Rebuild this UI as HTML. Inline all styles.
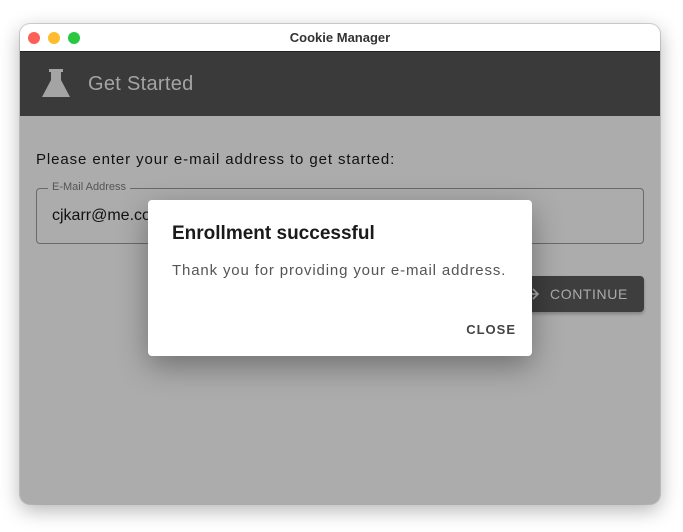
<!DOCTYPE html>
<html><head><meta charset="utf-8"><style>
*{margin:0;padding:0;box-sizing:border-box}
body{width:683px;height:532px;background:#fff;font-family:"Liberation Sans",sans-serif;position:relative;overflow:hidden}
.win{position:absolute;left:20px;top:24px;width:640px;height:480px;border-radius:10px;overflow:hidden;box-shadow:0 6px 20px rgba(0,0,0,.3),0 0 0 1px rgba(0,0,0,.15);background:#acacac}
.tb{position:absolute;left:0;top:0;width:640px;height:28px;background:#fff;border-bottom:1px solid #222;text-align:center;font-size:13px;font-weight:bold;color:#333;line-height:28px}
.dot{position:absolute;top:8px;width:12px;height:12px;border-radius:50%}
.hd{position:absolute;left:0;top:28px;width:640px;height:64px;background:#3a3a3a}
.hd span{position:absolute;left:68px;top:21px;font-size:20px;color:#a4a4a4;letter-spacing:.3px}
.abs{position:absolute}
</style></head><body>
<div class="win">
 <div class="tb">Cookie Manager
  <div class="dot" style="left:8px;background:#fe5f57"></div>
  <div class="dot" style="left:28px;background:#febc2e"></div>
  <div class="dot" style="left:48px;background:#28c840"></div>
 </div>
 <div class="hd">
  <svg class="abs" style="left:20px;top:16px" width="32" height="32" viewBox="0 0 32 32"><path d="M9 1h14v3h-2v8l9 17H2l9-17V4H9z" fill="#a4a4a4"/></svg>
  <span>Get Started</span>
 </div>
 <div class="abs" style="left:16px;top:127px;font-size:15px;color:#111;letter-spacing:.9px">Please enter your e-mail address to get started:</div>
 <div class="abs" style="left:16px;top:164px;width:608px;height:56px;border:1px solid #6a6a6a;border-radius:4px"></div>
 <div class="abs" style="left:28px;top:157px;font-size:11px;color:#555;background:#acacac;padding:0 4px">E-Mail Address</div>
 <div class="abs" style="left:32px;top:183px;font-size:16px;color:#111">cjkarr@me.com</div>
 <div class="abs" style="left:490px;top:252px;width:134px;height:36px;background:#3e3e3e;border-radius:4px;box-shadow:0 2px 3px rgba(0,0,0,.25);color:#aaa;font-size:14px;letter-spacing:.6px;line-height:36px;padding-left:40px">CONTINUE
  <svg class="abs" style="left:16px;top:11px" width="14" height="14" viewBox="0 0 14 14"><path d="M1 7h10M7 2l5 5-5 5" fill="none" stroke="#aaa" stroke-width="1.6"/></svg>
 </div>
 <div class="abs" style="left:128px;top:176px;width:384px;height:156px;background:#fff;border-radius:4px;box-shadow:0 10px 30px rgba(0,0,0,.35)">
  <div class="abs" style="left:24px;top:23px;font-size:19px;font-weight:bold;color:#1a1a1a">Enrollment successful</div>
  <div class="abs" style="left:24px;top:62px;font-size:15px;color:#555;letter-spacing:.85px">Thank you for providing your e-mail address.</div>
  <div class="abs" style="right:16px;top:122px;font-size:13px;font-weight:bold;color:#444;letter-spacing:1px">CLOSE</div>
 </div>
</div>
</body></html>
